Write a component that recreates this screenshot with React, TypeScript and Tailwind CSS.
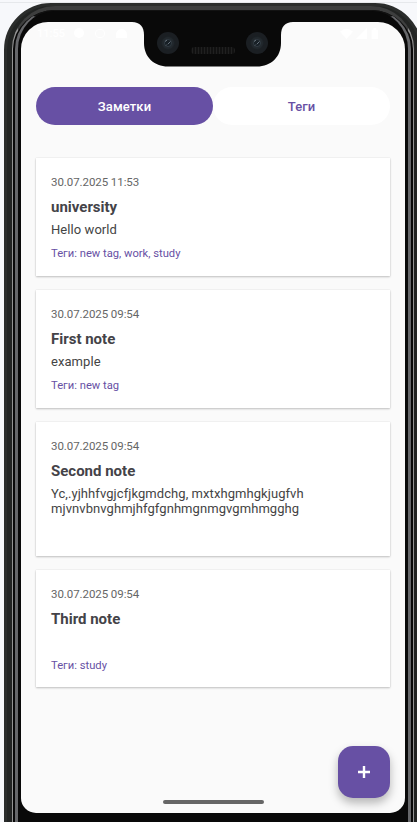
import React from "react";

type Note = { date: string; title: string; body: string[]; tags?: string; height: string };

const notes: Note[] = [
  { date: "30.07.2025 11:53", title: "university", body: ["Hello world"], tags: "new tag, work, study", height: "h-[118px]" },
  { date: "30.07.2025 09:54", title: "First note", body: ["example"], tags: "new tag", height: "h-[118px]" },
  {
    date: "30.07.2025 09:54",
    title: "Second note",
    body: ["Yc,.yjhhfvgjcfjkgmdchg, mxtxhgmhgkjugfvh", "mjvnvbnvghmjhfgfgnhmgnmgvgmhmgghg"],
    height: "h-[134px]",
  },
  { date: "30.07.2025 09:54", title: "Third note", body: [""], tags: "study", height: "h-[117px]" },
];

function NoteCard({ note }: { note: Note }) {
  return (
    <article className={`${note.height} bg-white px-[15px] pt-4 shadow-[0_1px_2px_rgba(0,0,0,0.22),0_0_1px_rgba(0,0,0,0.15)]`}>
      <div className="h-4 text-[11.5px] leading-4 tracking-[-0.07px] text-[#666]">{note.date}</div>
      <h2 className="mt-[7px] h-5 text-[15px] leading-5 font-bold text-[#444348]">{note.title}</h2>
      <div className="mt-[5px] min-h-[15px] text-[13px] leading-[15px] tracking-[0.07px] text-[#444]">
        {note.body.map((line) => (
          <div key={line} className="whitespace-nowrap">{line}</div>
        ))}
      </div>
      {note.tags && <div className="mt-[9px] text-[11.2px] leading-4 text-[#6750a4]">Теги: {note.tags}</div>}
    </article>
  );
}

function Lens() {
  return (
    <span className="flex size-[22px] items-center justify-center rounded-full bg-[#1b1f23]">
      <svg viewBox="0 0 16 16" className="size-4">
        <circle cx="8" cy="8" r="6.5" fill="#22282d" stroke="#1b2125" />
        <circle cx="8" cy="8" r="3.6" fill="#182026" stroke="#343d45" strokeWidth="0.8" />
        <path d="M5 6.5 7 5M8 9l2.5-2.5M6 10.5l1-1" stroke="#68737d" strokeWidth="1" />
      </svg>
    </span>
  );
}

function Notch() {
  return (
    <div className="absolute top-[-1px] left-[111px] h-[46px] w-[161px]">
      <svg viewBox="0 0 161 46" className="absolute inset-0 size-full">
        <path d="M0 0H161V1C153 1 149 6 149 14V22C149 36 139 45.500 125 45.500H36C22 45.500 12 36 12 22V14C12 6 8 1 0 1Z" fill="#090909" />
      </svg>
      <div className="relative flex items-center justify-between px-[25px] pt-[10px]">
        <Lens />
        <span className="mt-4 h-[7px] w-[44px] rounded-sm bg-[#111] bg-[radial-gradient(#383838_0.5px,transparent_0.9px)] bg-[size:3px_2px]" />
        <Lens />
      </div>
    </div>
  );
}

function StatusBar() {
  return (
    <div className="flex h-[22px] items-center justify-between pr-[26px] pl-[16px] text-white">
      <div className="flex items-center gap-[11px]">
        <span className="w-[26px] text-[11px] leading-none font-medium">11:55</span>
        <span className="size-[10px] rounded-full bg-white" />
        <span className="h-[9px] w-[10px] rounded-sm border border-white" />
        <span className="h-[9px] w-[11px] rounded-t-full bg-white" />
      </div>
      <svg viewBox="0 0 42 14" className="h-[13px] w-[39px]" fill="white">
        <path d="M0 5Q7-1 14 5L7 13ZM17 13H29V1ZM34 3H36V1H39V3H41V13H34Z" />
      </svg>
    </div>
  );
}

export default function App() {
  return (
    <div className="h-[822px] w-[417px] overflow-hidden bg-[#f7f8fb] font-[Roboto,sans-serif]">
      <div className="h-[3px] border-b border-[#e6e8eb]" />
      <div className="ml-1 h-[880px] w-[418px] rounded-t-[47px] border-[3px] border-[#2b2d2c] bg-[#222423]">
        <div className="ml-[5px] h-full w-[402px] rounded-t-[43px] border-x-[1px] border-t-[4px] border-x-[#939393] border-t-[#3d3e3e] bg-[#090909]">
          <div className="ml-[2px] h-full w-[396px] rounded-t-[39px] border-x-[3px] border-t border-x-[#66676a] border-t-[#121212] bg-[#090909] pt-[11px] pl-[3px]">
            <main className="relative flex h-[791px] w-[384px] flex-col rounded-t-[27px] rounded-b-[15px] bg-[#fafafa]">
              <Notch />
              <StatusBar />
              <nav className="mx-[15px] mt-[43px] flex h-[38px] rounded-full">
                <button className="w-[177px] rounded-full bg-[#6750a4] pt-px text-[13px] font-medium tracking-[0.1px] text-white">Заметки</button>
                <button className="flex-1 rounded-full bg-white pt-px text-[13px] font-medium tracking-[0.1px] text-[#6750a4]">Теги</button>
              </nav>
              <section className="mx-[15px] mt-[33px] flex flex-col gap-[14px]">
                {notes.map((note) => <NoteCard key={note.title} note={note} />)}
              </section>
              <button className="absolute right-[15px] bottom-[15px] flex size-[52px] items-center justify-center rounded-[15px] bg-[#6750a4] shadow-[0_5px_10px_rgba(0,0,0,0.28)]">
                <svg viewBox="0 0 12 12" className="size-3" fill="white"><path d="M4.800 0H7.200V4.800H12V7.200H7.200V12H4.800V7.200H0V4.800H4.800Z" /></svg>
              </button>
              <span className="absolute bottom-[9px] left-[142px] h-1 w-[101px] rounded-full bg-[#666]" />
            </main>
          </div>
        </div>
      </div>
    </div>
  );
}
